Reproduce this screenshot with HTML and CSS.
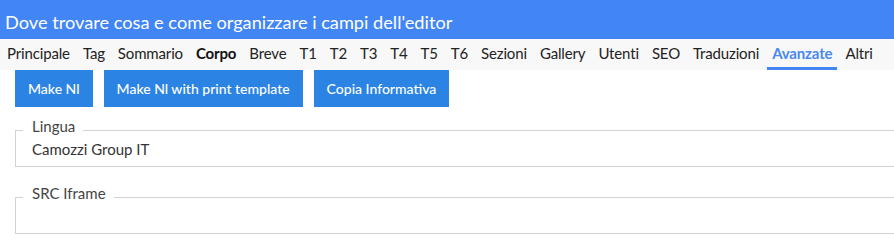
FILE: index.html
```html
<!DOCTYPE html>
<html lang="it">
<head>
<meta charset="utf-8">
<title>Editor</title>
<link rel="stylesheet" href="styles.css">
</head>
<body>
<header class="topbar">
  <h1 class="title">Dove trovare cosa e come organizzare i campi dell'editor</h1>
</header>
<nav class="tabs">
  <a class="tab">Principale</a>
  <a class="tab">Tag</a>
  <a class="tab">Sommario</a>
  <a class="tab tab-bold">Corpo</a>
  <a class="tab">Breve</a>
  <a class="tab">T1</a>
  <a class="tab">T2</a>
  <a class="tab">T3</a>
  <a class="tab">T4</a>
  <a class="tab">T5</a>
  <a class="tab">T6</a>
  <a class="tab">Sezioni</a>
  <a class="tab">Gallery</a>
  <a class="tab">Utenti</a>
  <a class="tab">SEO</a>
  <a class="tab">Traduzioni</a>
  <a class="tab tab-active">Avanzate</a>
  <a class="tab">Altri</a>
</nav>
<main class="content">
  <div class="actions">
    <button class="btn">Make Nl</button>
    <button class="btn">Make Nl with print template</button>
    <button class="btn">Copia Informativa</button>
  </div>
  <fieldset class="field field-first">
    <legend class="field-label">Lingua</legend>
    <div class="field-value">Camozzi Group IT</div>
  </fieldset>
  <fieldset class="field">
    <legend class="field-label">SRC Iframe</legend>
    <div class="field-value"></div>
  </fieldset>
</main>
</body>
</html>
```
FILE: styles.css
```css
html, body {
  margin: 0;
  padding: 0;
  background: #fff;
  overflow: hidden;
}
body {
  font-family: "Lato", "Liberation Sans", sans-serif;
  font-size: 15px;
  color: #222;
}
.topbar {
  height: 39px;
  background: #4285f4;
  display: flex;
  align-items: flex-end;
  padding-left: 5px;
}
.title {
  margin: 0 0 5px 0;
  font-size: 18.2px;
  font-weight: 400;
  color: #fff;
  line-height: 24px;
  white-space: nowrap;
}
.tabs {
  height: 31px;
  background: #f8f8f8;
  display: flex;
  padding-left: 2px;
  gap: 3px;
  white-space: nowrap;
  letter-spacing: -0.15px;
}
.tab {
  padding: 0 5px;
  line-height: 28px;
  border-bottom: 3px solid transparent;
  height: 28px;
  color: #222;
}
.tab-bold {
  font-weight: 700;
  color: #111;
}
.tab-active {
  font-weight: 700;
  color: #4a87f0;
  border-bottom-color: #4285f4;
}
.content {
  width: 1000px;
  padding-left: 15px;
}
.actions {
  display: flex;
  gap: 11px;
}
.btn {
  height: 37px;
  padding: 0 13px;
  border: 0;
  background: #2b84e4;
  color: #fff;
  font-family: inherit;
  font-size: 14px;
  font-weight: 500;
}
.field {
  margin: 10px 0 0 0;
  padding: 0 16px;
  border: 1px solid #cfd3d7;
  min-width: 0;
}
.field + .field {
  margin-top: 17px;
}
.field-label {
  margin-left: -9px;
  padding: 0 8px 8px 9px;
  line-height: 18px;
  color: #444;
}
.field-value {
  height: 27px;
  line-height: 20px;
  margin-top: -4px;
  color: #333;
}
```
